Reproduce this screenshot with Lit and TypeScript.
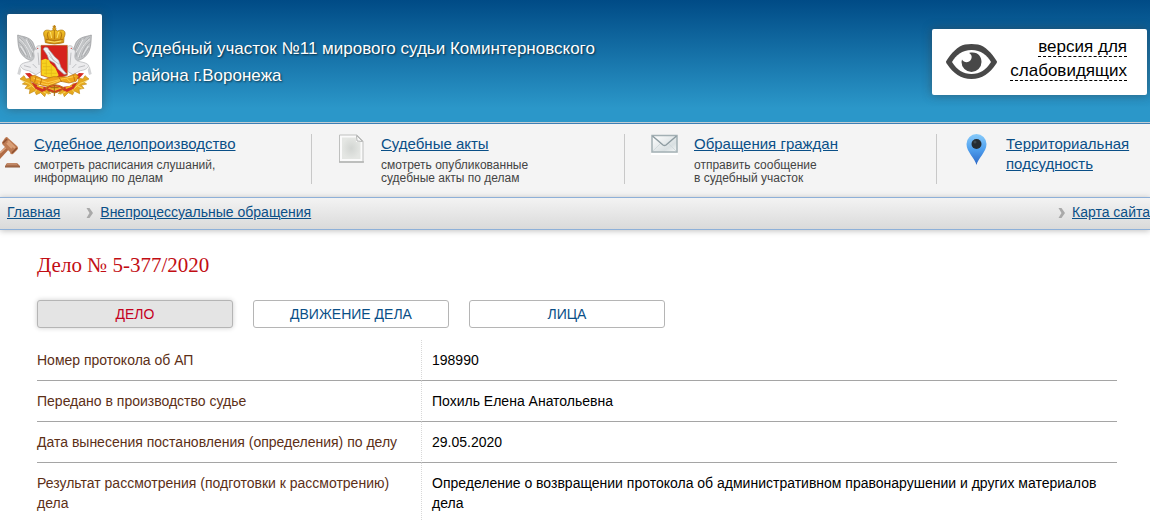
import { LitElement, html, css } from "lit";
import { customElement, state } from "lit/decorators.js";

const coatOfArms = html`
  <svg class="arms" viewBox="21 42 285 285" role="img" aria-label="Герб Воронежской области">
    <defs>
      <linearGradient id="gold" x1="0" y1="0" x2="0" y2="1">
        <stop offset="0" stop-color="#f5c52a" />
        <stop offset="1" stop-color="#cf8d10" />
      </linearGradient>
      <g id="supporter">
        <path d="M53 105 C54 130 54 150 68 166 C80 180 98 186 108 178 L118 160 C104 158 106 140 98 126 C88 110 66 110 53 105Z" fill="#c3c5c7" stroke="#8f9194" stroke-width="2" />
        <path d="M57 112 C72 124 84 144 90 174 M56 126 C68 134 78 150 82 172 M60 144 L75 168 M70 112 C86 122 96 142 99 170 M84 117 C94 130 101 146 106 164" fill="none" stroke="#9a9c9f" stroke-width="2" />
        <path d="M58 117 C74 128 86 150 92 172 M62 138 L79 166 M78 118 L99 158" fill="none" stroke="#f2f2f3" stroke-width="2.5" />
        <path d="M106 146 C110 135 122 134 126 144 L124 160 C124 180 122 194 124 214 L108 224 L86 212 C70 210 62 204 61 196 C72 184 90 188 98 180 C108 170 98 158 102 152Z" fill="#ececee" stroke="#adafb2" stroke-width="2" />
        <path d="M101 146 L111 148 M98 192 L110 204 M72 197 L92 202 M114 158 L117 195" stroke="#b4b6b9" stroke-width="2.5" />
        <circle cx="113" cy="145" r="2" fill="#d04038" />
        <path d="M58 198 L52 222 L60 225 L64 210" fill="#d2d3d5" />
        <path d="M75 220 L90 219 L106 234 L91 237Z" fill="#d72b24" />
        <path d="M60 237 l12 -10 6 10 12 -2 4 14 14 2 14 12 18 4 12 14 -14 -1 -4 10 -12 -12 -13 6 -5 -11 -16 8 2 -13 -15 -3 8 -9 -16 -4 10 -7Z" fill="#e7a91d" stroke="#c28d1c" stroke-width="2" />
        <path d="M65 242 L86 250 L104 265 L128 274 L148 285 M80 265 L93 258 M105 276 L112 266" fill="none" stroke="#fbe06b" stroke-width="2.5" />
        <path d="M94 246 L116 258 L136 260 L145 268 L126 276 L106 266Z" fill="#cf3223" />
        <path d="M111 257 L130 265" stroke="#f2b31d" stroke-width="5" />
      </g>
    </defs>
    <use href="#supporter" />
    <use href="#supporter" transform="translate(327 0) scale(-1 1)" />
    <path d="M123 136 H202 V226 L164 239 L123 226Z" fill="#d6231d" stroke="#a97013" stroke-width="1.5" />
    <path d="M124 181 L136 176 L147 181 L151 190 L166 204 L176 226 L164 238 L124 225Z" fill="#f7d31e" />
    <path d="M124 190 H140 M129 200 H151 M124 210 H160 M132 220 H170 M139 181 V225 M154 193 V230" stroke="#e3b416" stroke-width="2" />
    <path d="M130 148 C132 139 144 140 147 149 L164 170 L176 181 L183 202 L200 222 L192 223 L174 207 L164 190 L147 180 L142 166Z" fill="#eff0f2" stroke="#9da0a4" stroke-width="2" />
    <path d="M146 156 L160 180 L177 193 M149 169 L164 184" fill="none" stroke="#b8babd" stroke-width="2.5" />
    <path d="M134 113 C123 88 143 88 153 93 L163 88 L173 93 C184 87 203 89 192 113 L191 128 Q163 136 136 128Z" fill="url(#gold)" stroke="#a9720c" stroke-width="2" />
    <path d="M163 90 V118 M145 95 Q139 103 145 117 M182 95 Q188 103 182 117 M138 118 Q163 125 189 118" fill="none" stroke="#a86a0b" stroke-width="2.5" />
    <path d="M151 96 L155 114 M176 96 L171 114 M142 123 Q163 130 184 123" fill="none" stroke="#ffe36c" stroke-width="3" />
    <circle cx="163" cy="86" r="5" fill="#e6aa1e" stroke="#9b6b0e" stroke-width="1.5" />
    <path d="M163 75 V85 M158 79 H168" stroke="#bc7f0b" stroke-width="3" />
    <path d="M91 229 L104 226 L132 239 L160 230 L202 231 L226 221 L236 229 L228 244 L207 249 L183 244 L146 260 L106 251 L91 242Z" fill="#efa51b" stroke="#b46c0d" stroke-width="2" />
    <path d="M100 234 L143 248 L190 236 L226 229 M114 249 L145 255 L181 241 M200 235 L211 246" fill="none" stroke="#ffcf4d" stroke-width="3" />
    <path d="M108 230 L104 247 M125 237 L121 253 M177 232 L185 246 M221 226 L224 243" stroke="#ba6d09" stroke-width="2.5" />
    <path d="M137 263 Q163 245 192 263 L182 273 L164 279 L144 273Z" fill="#cf3523" stroke="#bd7c16" stroke-width="3" />
    <path d="M143 265 Q163 252 186 265 L164 273Z" fill="#f0b526" />
    <path d="M151 263 H176 M163 256 V288" stroke="#9e680d" stroke-width="3" />
  </svg>
`;

const eyeIcon = html`
  <svg class="eye" viewBox="0 0 51 35" aria-hidden="true">
    <path d="M0 17.5 C5 9 12 2 19 .5 Q25.500 -.5 32 .5 C39 2 46 9 51 17.5 Q51 19 50 20 C44 29 36 35 25.5 35 S7 29 1 20 Q0 19 0 17.5Z" fill="#484848" />
    <path d="M6 18 C10 11 16 6 25.500 6 S41 11 45 18 C40 26 34 30 25.500 30 S11 26 6 18Z" fill="#fff" />
    <path d="M23 9 C32 7 35.500 13 35.500 18 A10 10 0 0 1 15.500 18 L16 15.500 C18 19 23 19 25 15.500 C26.500 12.500 25.500 10.500 23 9Z" fill="#484848" />
  </svg>
`;

const gavelIcon = html`
  <svg class="icon gavel" viewBox="0 0 21 32" aria-hidden="true">
    <path d="M0 15 L8 7 L11 10 L0 22Z" fill="#b06b45" />
    <path d="M0 16 L9 8" stroke="#dba27c" stroke-width="1.5" />
    <path d="M5 1 Q7 -1 8 1 L17 9 Q19 11 17 13 L13 17 Q10 18 10 15 L3 8 Q1 6 3 4Z" fill="#bd7a52" />
    <path d="M7 2 L3 6 M17 11 L12 16" stroke="#8d5030" stroke-width="1.5" />
    <path d="M8 4 L15 11 M7 6 L12 11" stroke="#daa078" stroke-width="2" />
    <path d="M7 26 H17 L20 29 V30 H5 V29Z" fill="#ad704d" />
    <path d="M7 27 H17" stroke="#d4a081" />
    <path d="M5 30 H20" stroke="#8a5638" />
  </svg>
`;

const documentIcon = html`
  <svg class="icon" viewBox="0 0 27 30" aria-hidden="true">
    <defs>
      <radialGradient id="sheet">
        <stop offset="0" stop-color="#d2d5d2" />
        <stop offset="1" stop-color="#e4e6e3" />
      </radialGradient>
    </defs>
    <path d="M1.5 1 H19 L25 7 V28 H1.5Z" fill="#fafafa" stroke="#bfc0bf" />
    <path d="M4 3.5 H18 V8 H22.5 V25 H4Z" fill="url(#sheet)" />
    <path d="M18.5 1.5 L19 7 L24.5 7.5Z" fill="#f8f8f8" stroke="#b5b6b5" />
    <path d="M1 28 H26" stroke="#b3b4b3" stroke-width="1.5" />
  </svg>
`;

const mailIcon = html`
  <svg class="icon" viewBox="0 0 27 22" aria-hidden="true">
    <defs>
      <linearGradient id="paper" x1="0" y1="0" x2="1" y2="1">
        <stop offset="0" stop-color="#fff" />
        <stop offset="0.7" stop-color="#d9e0e2" />
        <stop offset="1" stop-color="#f7f9f9" />
      </linearGradient>
    </defs>
    <path d="M0 20 H27" stroke="#fff" stroke-width="2" />
    <path d="M1 1.5 H26 V18 H1Z" fill="url(#paper)" stroke="#a3b0b4" stroke-width="1.5" />
    <path d="M2 17 L10 9 M25 17 L17 9" stroke="#d2dadd" />
    <path d="M1.5 2 L12 11 Q13.5 12 15 11 L25.5 2" fill="none" stroke="#8e9ca1" stroke-width="1.5" />
  </svg>
`;

const pinIcon = html`
  <svg class="icon" viewBox="0 0 21 31" aria-hidden="true">
    <defs>
      <linearGradient id="drop" x1="0" y1="0" x2="0" y2="1">
        <stop offset="0" stop-color="#88cbfa" />
        <stop offset="0.5" stop-color="#4e9fee" />
        <stop offset="1" stop-color="#2c67c6" />
      </linearGradient>
    </defs>
    <path d="M10.5 31 C9 24 .5 18 .5 10 A10 10 0 0 1 20.5 10 C20.5 18 12 24 10.5 31Z" fill="url(#drop)" />
    <circle cx="10.5" cy="10" r="5" fill="#252c32" />
    <circle cx="9" cy="8" r="1.5" fill="#3d4850" />
  </svg>
`;

const chevron = () => html`
  <svg class="chevron" viewBox="0 0 7 10" aria-hidden="true">
    <path d="M.5 0 H3.5 L7 5 L3.5 10 H.5 L3.5 5Z" fill="#a9a9a9" />
  </svg>
`;

const sections = [
  { title: "Судебное делопроизводство", lines: ["смотреть расписания слушаний,", "информацию по делам"], icon: gavelIcon },
  { title: "Судебные акты", lines: ["смотреть опубликованные", "судебные акты по делам"], icon: documentIcon },
  { title: "Обращения граждан", lines: ["отправить сообщение", "в судебный участок"], icon: mailIcon },
  { title: "Территориальная подсудность", lines: [], icon: pinIcon },
];

const tabs = ["ДЕЛО", "ДВИЖЕНИЕ ДЕЛА", "ЛИЦА"];

const rows = [
  ["Номер протокола об АП", "198990"],
  ["Передано в производство судье", "Похиль Елена Анатольевна"],
  ["Дата вынесения постановления (определения) по делу", "29.05.2020"],
  [
    "Результат рассмотрения (подготовки к рассмотрению) дела",
    "Определение о возвращении протокола об административном правонарушении и других материалов дела",
  ],
];

@customElement("app-root")
export class AppRoot extends LitElement {
  @state() private active = 0;

  static styles = css`
    :host {
      display: block;
      overflow: hidden;
      background: #fff;
      color: #000;
      font: 14px/20px "Liberation Sans", Arial, sans-serif;
    }
    a {
      color: #0a4f87;
    }
    .header {
      display: flex;
      align-items: flex-start;
      padding: 14px 3px 14px 7px;
      background: linear-gradient(#004b86, #2b97c9 88%, #2b97c9);
      border-bottom: 1px solid #3d7fb5;
      box-shadow: inset 0 -1px #c3cdd3;
    }
    .logo {
      display: block;
      flex: none;
      background: #fff;
      border-radius: 2px;
      box-shadow: 0 0 10px rgba(60, 60, 60, 0.5);
    }
    .arms {
      display: block;
      width: 95px;
      height: 95px;
    }
    .court {
      flex: 1;
      max-width: 480px;
      margin: 21px 0 0 30px;
      color: #fff;
      font-size: 17px;
      font-weight: 400;
      line-height: 27px;
      text-shadow: 1px 1px 2px rgba(0, 0, 0, 0.6);
    }
    .vision {
      display: flex;
      align-items: center;
      justify-content: space-between;
      box-sizing: border-box;
      width: 215px;
      height: 66px;
      margin: 15px 0 0 auto;
      padding: 0 20px 2px 14px;
      background: #fff;
      border-radius: 2px;
      box-shadow: 0 0 10px rgba(60, 60, 60, 0.5);
      color: #000;
      font-size: 17px;
      line-height: 24px;
      text-align: right;
      text-decoration: none;
    }
    .caption {
      padding-bottom: 5px;
    }
    .caption span {
      border-bottom: 1px dashed #000;
    }
    .eye {
      width: 51px;
      height: 35px;
    }
    .sections {
      display: grid;
      grid-template-columns: 312fr 313fr 312fr 213fr;
      padding: 10px 0 13px;
      background: #f4f4f4;
    }
    .section {
      display: grid;
      grid-template-columns: 43px 1fr;
      align-items: start;
      box-sizing: border-box;
      height: 50px;
      padding-left: 26px;
      border-right: 1px solid #c8c8c8;
    }
    .section:first-child {
      grid-template-columns: 34px 1fr;
      padding-left: 0;
    }
    .section:last-child {
      padding-left: 29px;
      grid-template-columns: 40px 1fr;
      border-right: 0;
    }
    .section a {
      font-size: 15px;
    }
    .section p {
      margin: 5px 0 0;
      color: #444;
      font-size: 12px;
      line-height: 13px;
    }
    .icon {
      display: block;
      height: auto;
      width: 27px;
    }
    .gavel {
      width: 21px;
      margin-top: 3px;
    }
    .section:last-child .icon {
      width: 21px;
    }
    .crumbs {
      display: flex;
      align-items: center;
      height: 31px;
      padding-left: 7px;
      background: linear-gradient(#f3f3f3, #dadada);
      border-top: 1px solid #8eb0d8;
      border-bottom: 1px solid #8eb0d8;
      box-shadow: 0 1px 6px rgba(0, 0, 0, 0.25);
      white-space: nowrap;
    }
    .crumbs a {
      margin-bottom: 3px;
    }
    .chevron {
      flex: none;
      width: 7px;
      height: 10px;
      margin: 0 7px 2px 26px;
    }
    .crumbs .chevron:nth-of-type(2) {
      margin-left: auto;
    }
    .main {
      padding: 23px 33px 0 37px;
    }
    h2 {
      margin: 0;
      color: #c20d13;
      font: 400 21px/24px Georgia, "Liberation Serif", serif;
    }
    .tabs {
      display: flex;
      gap: 20px;
      margin: 23px 0 12px;
    }
    .tab {
      width: 196px;
      height: 28px;
      padding: 0;
      background: #fff;
      border: 1px solid #b5b5b5;
      border-radius: 3px;
      color: #0a4f87;
      font: inherit;
      cursor: pointer;
    }
    .tab.active {
      background: #e4e4e4;
      color: #c4001e;
      box-shadow: 0 0 5px rgba(0, 0, 0, 0.2);
    }
    table {
      width: 100%;
      border-collapse: separate;
      border-spacing: 0;
      table-layout: fixed;
    }
    th,
    td {
      padding: 10px;
      border-bottom: 1px solid #a5a5a5;
      font-weight: 400;
      text-align: left;
      vertical-align: top;
    }
    th {
      width: 374px;
      padding-left: 0;
      color: #5c2f17;
    }
    td {
      border-left: 1px dotted #d8d8d8;
    }
  `;

  render() {
    return html`
      <header class="header">
        <a class="logo" href="#">${coatOfArms}</a>
        <h1 class="court">Судебный участок №11 мирового судьи Коминтерновского района г.Воронежа</h1>
        <a class="vision" href="#">${eyeIcon}<span class="caption"><span>версия для</span><br /><span>слабовидящих</span></span></a>
      </header>
      <nav class="sections">
        ${sections.map(
          (s) => html`
            <div class="section">
              ${s.icon}
              <div>
                <a href="#">${s.title}</a>
                ${s.lines.length ? html`<p>${s.lines[0]}<br />${s.lines[1]}</p>` : ""}
              </div>
            </div>
          `
        )}
      </nav>
      <nav class="crumbs">
        <a href="#">Главная</a>
        ${chevron()}
        <a href="#">Внепроцессуальные обращения</a>
        ${chevron()}
        <a href="#">Карта сайта</a>
      </nav>
      <main class="main">
        <h2>Дело № 5-377/2020</h2>
        <div class="tabs" role="tablist">
          ${tabs.map(
            (t, i) => html`
              <button
                class="tab ${i === this.active ? "active" : ""}"
                role="tab"
                aria-selected=${i === this.active}
                @click=${() => (this.active = i)}
              >${t}</button>
            `
          )}
        </div>
        <table>
          <tbody>
            ${rows.map(([label, value]) => html`<tr><th scope="row">${label}</th><td>${value}</td></tr>`)}
          </tbody>
        </table>
      </main>
    `;
  }
}
